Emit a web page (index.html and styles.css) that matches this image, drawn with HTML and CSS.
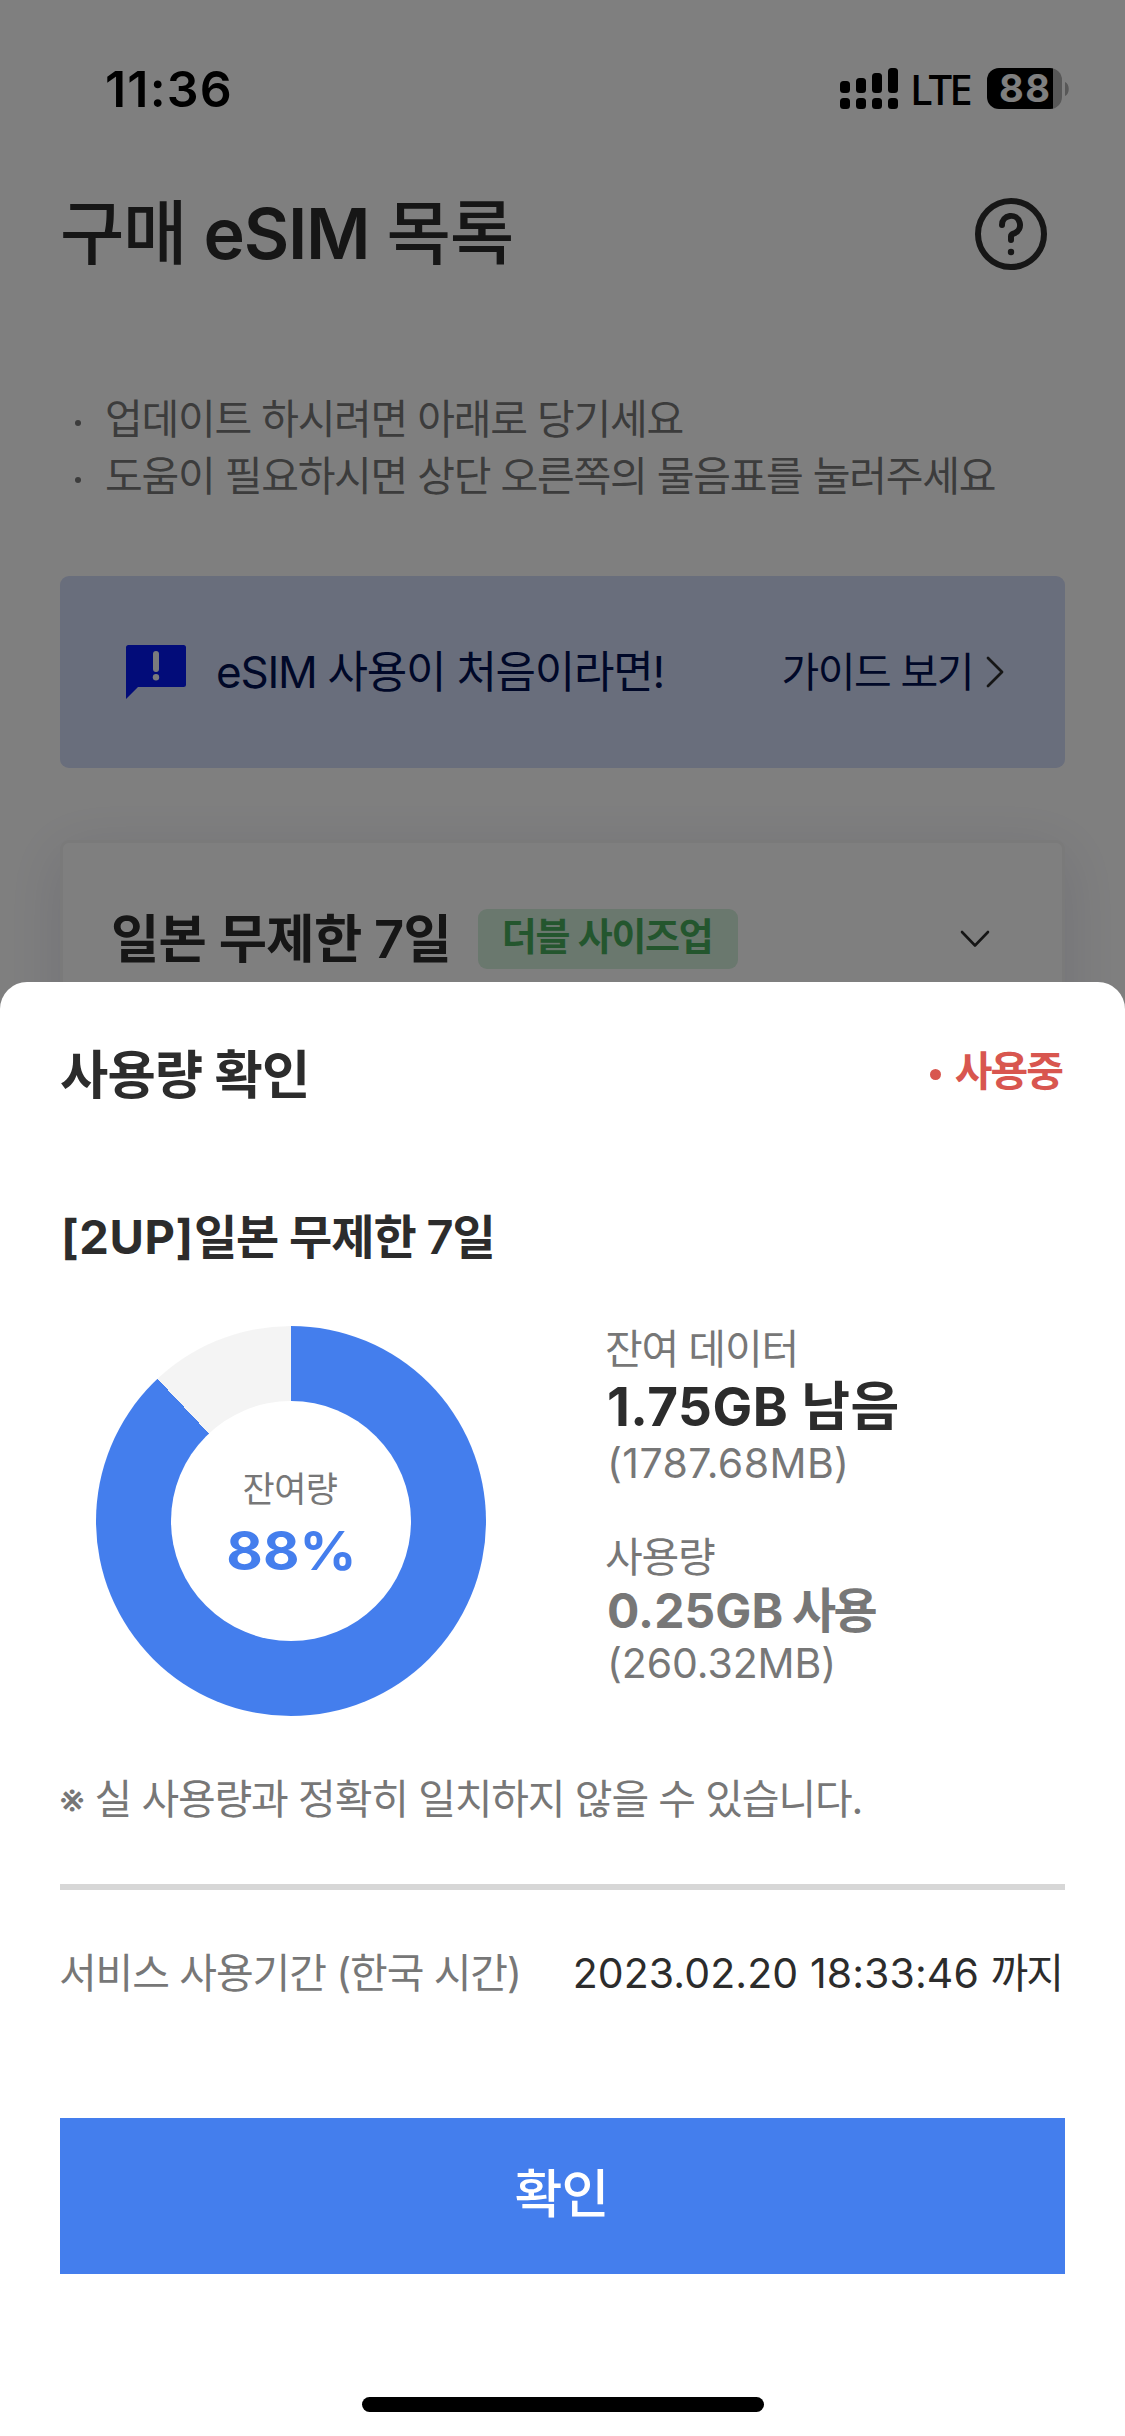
FILE: index.html
```html
<!DOCTYPE html>
<html lang="ko">
<head>
<meta charset="utf-8">
<title>구매 eSIM 목록</title>
<link rel="stylesheet" href="styles.css">
</head>
<body>
<main class="page">
  <div class="status-bar">
    <span class="time">11:36</span>
    <div class="status-icons">
      <svg class="signal" width="60" height="44" viewBox="0 0 60 44">
        <rect x="1" y="14" width="10" height="12" rx="3.5"/><rect x="17" y="11" width="10" height="15" rx="3.5"/>
        <rect x="33" y="6" width="10" height="20" rx="3.5"/><rect x="49" y="1" width="10" height="25" rx="3.5"/>
        <rect x="1" y="31" width="10" height="11" rx="3.5"/><rect x="17" y="31" width="10" height="11" rx="3.5"/>
        <rect x="33" y="31" width="10" height="11" rx="3.5"/><rect x="49" y="31" width="10" height="11" rx="3.5"/>
      </svg>
      <span class="network">LTE</span>
      <div class="battery"><div class="battery-body">88</div><svg width="5" height="14" viewBox="0 0 5 14"><path d="M0 0C5 2 5 12 0 14Z" fill="#b0b0b0"/></svg></div>
    </div>
  </div>

  <header class="header">
    <h1 class="title">구매 <span class="latin">eSIM</span> 목록</h1>
    <svg class="help" width="72" height="72" viewBox="0 0 72 72" fill="none" stroke="#2c2c2c" stroke-width="6">
      <circle cx="36" cy="36" r="33"/>
      <path d="M27 27a9 9 0 1 1 12.500 8.200c-2.300 1-3.500 1-3.500 3.300V42" stroke-linecap="round" stroke-linejoin="round"/>
      <circle cx="36" cy="54" r="3.200" fill="#2c2c2c" stroke="none"/>
    </svg>
  </header>

  <ul class="notices">
    <li>업데이트 하시려면 아래로 당기세요</li>
    <li>도움이 필요하시면 상단 오른쪽의 물음표를 눌러주세요</li>
  </ul>

  <section class="banner">
    <svg class="banner-icon" width="60" height="54" viewBox="0 0 60 54">
      <path d="M2.500 0H57.500A2.500 2.500 0 0 1 60 2.500V39.500A2.500 2.500 0 0 1 57.500 42H12L0 54V2.500A2.500 2.500 0 0 1 2.500 0Z" fill="#0518f2"/>
      <path d="M30 9V24" stroke="#f4f4fa" stroke-width="6" stroke-linecap="round"/>
      <circle cx="30" cy="32.300" r="3.200" fill="#f4f4fa"/>
    </svg>
    <p class="banner-text">eSIM 사용이 처음이라면!</p>
    <a class="banner-link">가이드 보기</a>
    <svg width="18" height="34" viewBox="0 0 18 34" fill="none" stroke="#2c2c2c" stroke-width="2.800" stroke-linecap="round" stroke-linejoin="round"><path d="M2 3L16 17L2 31"/></svg>
  </section>

  <section class="card">
    <div class="card-row">
      <h2 class="card-title">일본 무제한 7일</h2>
      <span class="tag">더블 사이즈업</span>
      <svg class="chevron" width="30" height="18" viewBox="0 0 30 18" fill="none" stroke="#2c2c2c" stroke-width="2.600" stroke-linecap="round" stroke-linejoin="round"><path d="M2 2L15 15.500L28 2"/></svg>
    </div>
  </section>
</main>

<div class="overlay"></div>

<section class="sheet">
  <div class="sheet-head">
    <h2 class="sheet-title">사용량 확인</h2>
    <span class="state">사용중</span>
  </div>
  <h3 class="product"><span class="prefix">[2UP]</span>일본 무제한 7일</h3>
  <div class="usage">
    <div class="donut">
      <div class="donut-hole">
        <span class="donut-label">잔여량</span>
        <strong class="donut-value">88%</strong>
      </div>
    </div>
    <div class="stats">
      <div class="stat stat-left">
        <span class="stat-label">잔여 데이터</span>
        <strong class="stat-value">1.75GB 남음</strong>
        <span class="stat-detail">(1787.68MB)</span>
      </div>
      <div class="stat stat-used">
        <span class="stat-label">사용량</span>
        <strong class="stat-value"><span class="amount">0.25GB</span> 사용</strong>
        <span class="stat-detail">(260.32MB)</span>
      </div>
    </div>
  </div>
  <p class="note">※ 실 사용량과 정확히 일치하지 않을 수 있습니다.</p>
  <hr class="divider">
  <div class="period">
    <span class="period-label">서비스 사용기간 (한국 시간)</span>
    <span class="period-value">2023.02.20 18:33:46 <span class="until">까지</span></span>
  </div>
  <button class="confirm">확인</button>
  <div class="home-indicator"></div>
</section>
</body>
</html>
```
FILE: styles.css
```css
* { box-sizing: border-box; margin: 0; padding: 0; }

body {
  position: relative;
  width: 1125px;
  height: 2436px;
  overflow: hidden;
  background: #fff;
  color: #2c2c2c;
  font-family: Inter, "Noto Sans CJK KR", sans-serif;
}

h1, h2, h3 { font-weight: 600; }
h1, h2, h3, p, span, a, strong { white-space: nowrap; }

.page { height: 2436px; overflow: hidden; }

/* Status bar */
.status-bar {
  display: flex;
  align-items: center;
  justify-content: space-between;
  height: 177px;
  padding: 0 55px 0 105px;
  color: #000;
}
.time { font-size: 50px; font-weight: 600; letter-spacing: 1.2px; }
.status-icons { display: flex; align-items: center; }
.network {
  width: 62px;
  margin: 0 15px 0 11px;
  font: 500 42px/60px "Noto Sans", sans-serif;
  letter-spacing: -3px;
}
.battery { display: flex; align-items: center; gap: 3px; }
.battery-body {
  width: 75px;
  height: 41px;
  padding-left: 12px;
  border-radius: 12px;
  background: linear-gradient(90deg, #000 66px, #b0b0b0 66px);
  color: #fff;
  font-size: 38px;
  font-weight: 700;
  line-height: 41px;
  letter-spacing: 1.5px;
}

/* Header */
.header {
  display: flex;
  align-items: center;
  justify-content: space-between;
  height: 114px;
  padding: 0 78px 0 60px;
}
.title { font-size: 70px; font-weight: 500; line-height: 114px; letter-spacing: -1.3px; }
.latin { font-weight: 600; }

/* Notices */
.notices { margin-top: 100px; padding-left: 75px; list-style: none; color: #787878; }
.notices li {
  display: flex;
  align-items: center;
  gap: 24px;
  font-size: 41px;
  line-height: 57px;
  letter-spacing: -1.25px;
  white-space: nowrap;
}
.notices li::before {
  content: "";
  width: 6px;
  height: 6px;
  margin-top: 6px;
  border-radius: 50%;
  background: #787878;
}

/* Guide banner */
.banner {
  display: flex;
  align-items: center;
  height: 192px;
  margin: 71px 60px 0;
  padding: 0 61px 0 66px;
  border-radius: 9px;
  background: #d3dcf8;
  color: #001050;
}
.banner-icon { margin-right: 30px; }
.banner-text { font-size: 44px; line-height: 60px; letter-spacing: -1.25px; }
.banner-link { margin-left: auto; margin-right: 13px; font-size: 41px; line-height: 60px; letter-spacing: -1.45px; }

/* eSIM card */
.card {
  height: 700px;
  margin: 72px 60px 0;
  padding: 63px 72px 0 48px;
  border: 3px solid #f4f4f4;
  border-radius: 9px;
  background: #fff;
  box-shadow: 0 12px 60px rgba(50, 50, 120, .14);
}
.card-row { display: flex; align-items: center; height: 66px; }
.card-title { font-size: 52.5px; line-height: 66px; letter-spacing: -.7px; }
.tag {
  width: 260px;
  height: 60px;
  margin-left: 27px;
  padding-right: 2px;
  border-radius: 9px;
  background: #d5f0dd;
  color: #48ad5c;
  font-size: 38px;
  font-weight: 600;
  line-height: 54px;
  letter-spacing: -1.23px;
  text-align: center;
}
.chevron { margin-left: auto; }

.overlay { position: absolute; inset: 0; background: rgba(0, 0, 0, .5); }

/* Bottom sheet */
.sheet {
  position: absolute;
  inset: 982px 0 0;
  padding: 63px 60px 0;
  border-radius: 27px 27px 0 0;
  background: #fff;
}
.sheet-head { display: flex; align-items: center; justify-content: space-between; height: 60px; }
.sheet-title { font-size: 52.5px; line-height: 60px; letter-spacing: -.9px; }
.state {
  display: flex;
  align-items: center;
  gap: 14px;
  padding: 0 3px 8px 0;
  color: #d8564f;
  font-size: 41px;
  font-weight: 600;
  line-height: 60px;
  letter-spacing: -2px;
}
.state::before {
  content: "";
  width: 11px;
  height: 11px;
  margin-top: 7px;
  border-radius: 50%;
  background: #d8564f;
}
.product { margin: 102px 0 0 1px; font-size: 47px; line-height: 60px; letter-spacing: -1.05px; }
.prefix { font-weight: 700; letter-spacing: .6px; }

.usage { display: flex; gap: 119px; height: 390px; margin: 59px 0 0 36px; }
.donut {
  display: grid;
  place-items: center;
  width: 390px;
  height: 390px;
  border-radius: 50%;
  background: conic-gradient(#447eed 88%, #f4f4f4 88%);
}
.donut-hole {
  display: flex;
  flex-direction: column;
  align-items: center;
  justify-content: center;
  width: 240px;
  height: 240px;
  padding-top: 16px;
  border-radius: 50%;
  background: #fff;
}
.donut-label { margin-right: 2px; color: #777; font-size: 35px; line-height: 44px; letter-spacing: -.6px; }
.donut-value { color: #447eed; font-size: 53px; line-height: 80px; transform: scaleX(1.06); }

.stats { display: flex; flex-direction: column; gap: 50px; color: #777; }
.stat { display: flex; flex-direction: column; }
.stat-label { font-size: 41px; line-height: 46px; letter-spacing: -1.2px; }
.stat-value { padding-left: 2px; }
.stat-left .stat-value { color: #2c2c2c; font-size: 53px; line-height: 70px; letter-spacing: .5px; }
.stat-used .stat-value { font-size: 48px; line-height: 62px; letter-spacing: -2.6px; }
.stat-used .amount { letter-spacing: .1px; }
.stat-detail { padding-left: 2px; font-size: 41px; line-height: 42px; letter-spacing: .4px; }
.stat-used .stat-detail { letter-spacing: -.1px; }

.note { margin: 53px 0 0 -1px; color: #777; font-size: 41px; line-height: 60px; letter-spacing: -1.15px; }
.divider { height: 6px; margin-top: 55px; border: 0; background: #d7d7d7; }
.period { display: flex; justify-content: space-between; height: 60px; margin: 53px 0 0 -1px; padding-right: 3px; font-size: 41px; line-height: 60px; }
.period-label { color: #777; letter-spacing: -1.1px; }
.period-value { letter-spacing: .1px; }
.until { letter-spacing: -2px; }
.confirm {
  display: block;
  width: 1005px;
  height: 156px;
  margin-top: 115px;
  padding: 0 2px 2px 0;
  border: 0;
  background: #447eed;
  color: #fff;
  font: 500 52px/60px Inter, "Noto Sans CJK KR", sans-serif;
  letter-spacing: -.8px;
}
.home-indicator { width: 402px; height: 15px; margin: 123px auto 0; border-radius: 8px; background: #000; }
```
